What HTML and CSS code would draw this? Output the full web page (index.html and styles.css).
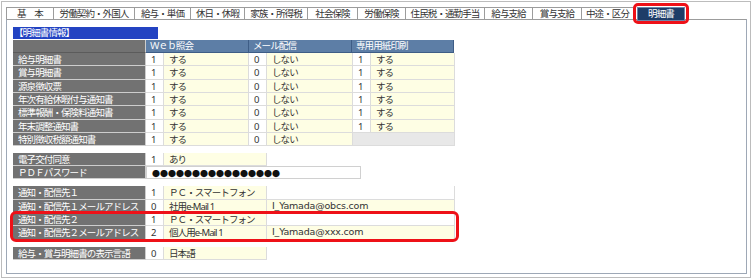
FILE: index.html
```html
<!DOCTYPE html>
<html lang="ja">
<head>
    <meta charset="UTF-8">
    <title>明細書</title>
    <link rel="stylesheet" href="styles.css">
</head>
<body>
    <div class="frame">
        <div class="tabs">
            <div class="tab" style="width:47px">基　本</div>
            <div class="tab" style="width:81px">労働契約・外国人</div>
            <div class="tab" style="width:56px">給与・単価</div>
            <div class="tab" style="width:54px">休日・休暇</div>
            <div class="tab" style="width:63px">家族・所得税</div>
            <div class="tab" style="width:50px">社会保険</div>
            <div class="tab" style="width:48px">労働保険</div>
            <div class="tab" style="width:79px">住民税・通勤手当</div>
            <div class="tab" style="width:48px">給与支給</div>
            <div class="tab" style="width:49px">賞与支給</div>
            <div class="tab" style="width:52px">中途・区分</div>
            <div class="tab active">明細書</div>
        </div>
        <div class="panel">
            <div class="sec-title">【明細書情報】</div>

            <!-- 明細書の配信方法 -->
            <div class="grid">
                <div class="row head">
                    <div class="lbl"></div>
                    <div class="hcell">Ｗｅｂ照会</div>
                    <div class="hcell">メール配信</div>
                    <div class="hcell">専用用紙印刷</div>
                </div>
                <div class="row">
                    <div class="lbl">給与明細書</div>
                    <div class="code">1</div><div class="val v1">する</div>
                    <div class="code">0</div><div class="val v2">しない</div>
                    <div class="code">1</div><div class="val v3">する</div>
                </div>
                <div class="row">
                    <div class="lbl">賞与明細書</div>
                    <div class="code">1</div><div class="val v1">する</div>
                    <div class="code">0</div><div class="val v2">しない</div>
                    <div class="code">1</div><div class="val v3">する</div>
                </div>
                <div class="row">
                    <div class="lbl">源泉徴収票</div>
                    <div class="code">1</div><div class="val v1">する</div>
                    <div class="code">0</div><div class="val v2">しない</div>
                    <div class="code">1</div><div class="val v3">する</div>
                </div>
                <div class="row">
                    <div class="lbl">年次有給休暇付与通知書</div>
                    <div class="code">1</div><div class="val v1">する</div>
                    <div class="code">0</div><div class="val v2">しない</div>
                    <div class="code">1</div><div class="val v3">する</div>
                </div>
                <div class="row">
                    <div class="lbl">標準報酬・保険料通知書</div>
                    <div class="code">1</div><div class="val v1">する</div>
                    <div class="code">0</div><div class="val v2">しない</div>
                    <div class="code">1</div><div class="val v3">する</div>
                </div>
                <div class="row">
                    <div class="lbl">年末調整通知書</div>
                    <div class="code">1</div><div class="val v1">する</div>
                    <div class="code">0</div><div class="val v2">しない</div>
                    <div class="code">1</div><div class="val v3">する</div>
                </div>
                <div class="row">
                    <div class="lbl">特別徴収税額通知書</div>
                    <div class="code">1</div><div class="val v1">する</div>
                    <div class="code">0</div><div class="val v2">しない</div>
                    <div class="blank"></div>
                </div>
            </div>

            <!-- 電子交付 -->
            <div class="block first">
                <div class="row">
                    <div class="lbl">電子交付同意</div>
                    <div class="code">1</div><div class="val wide">あり</div>
                </div>
                <div class="row">
                    <div class="lbl">ＰＤＦパスワード</div>
                    <div class="pass">●●●●●●●●●●●●●●●●</div>
                </div>
            </div>

            <!-- 通知・配信先 -->
            <div class="block">
                <div class="row">
                    <div class="lbl">通知・配信先１</div>
                    <div class="code">1</div><div class="val wide">ＰＣ・スマートフォン</div>
                    <div class="empty"></div>
                </div>
                <div class="row">
                    <div class="lbl">通知・配信先１メールアドレス</div>
                    <div class="code">0</div><div class="val wide">社用e-Mail 1</div>
                    <div class="val addr">I_Yamada@obcs.com</div>
                </div>
                <div class="row">
                    <div class="lbl">通知・配信先２</div>
                    <div class="code">1</div><div class="val wide">ＰＣ・スマートフォン</div>
                    <div class="empty"></div>
                </div>
                <div class="row">
                    <div class="lbl">通知・配信先２メールアドレス</div>
                    <div class="code">2</div><div class="val wide">個人用e-Mail 1</div>
                    <div class="val addr">I_Yamada@xxx.com</div>
                </div>
            </div>

            <!-- 表示言語 -->
            <div class="block">
                <div class="row">
                    <div class="lbl">給与・賞与明細書の表示言語</div>
                    <div class="code">0</div><div class="val wide">日本語</div>
                </div>
            </div>

            <div class="mark mark-tab"></div>
            <div class="mark mark-rows"></div>
        </div>
    </div>
</body>
</html>
```

FILE: styles.css
```css
body {
    margin: 0;
    background-color: #fff;
    font-family: "Noto Sans", "Noto Sans CJK JP", sans-serif;
    font-size: 9.5px;
    letter-spacing: -0.9px;
    color: #333;
}
.frame {
    margin: 1px;
    height: 277px;
    border: 1px solid #bcbcbc;
    box-sizing: border-box;
    padding: 5px 0 0 4px;
}
.tabs {
    display: flex;
    height: 12px;
}
.tab {
    box-sizing: border-box;
    height: 13px;
    border: 1px solid #9c9c9c;
    border-bottom: none;
    border-right: none;
    background-color: #fff;
    text-align: center;
    line-height: 12px;
    color: #333;
    white-space: nowrap;
}
.tab.active {
    width: 48px;
    margin-left: 4px;
    height: 14px;
    border: 1px solid #6d86aa;
    background-color: #1e3d68;
    color: #fff;
    position: relative;
    z-index: 1;
}
.panel {
    position: relative;
    box-sizing: border-box;
    width: 741px;
    height: 255px;
    border: 1px solid #9ea8b6;
    border-top-color: #9c9c9c;
    padding: 7px 0 0 6px;
}
.sec-title {
    width: 145px;
    height: 12px;
    line-height: 12px;
    background-color: #2343c2;
    color: #fff;
    padding-left: 1px;
    box-sizing: border-box;
    margin-bottom: 1px;
}
.row {
    display: flex;
    height: 13.333px;
    line-height: 12px;
}
.head {
    height: 13px;
}
.row > div {
    box-sizing: border-box;
    height: 100%;
    padding-top: 1px;
    white-space: nowrap;
}
.head > div {
    padding-top: 0;
}
.lbl {
    width: 133px;
    background-color: #727272;
    color: #fff;
    padding-left: 5px;
    border-bottom: 1px solid #cdcdcd;
    border-right: 1px solid #cdcdcd;
}
.head .lbl {
    border-bottom-color: #5b5b5b;
}
.hcell {
    width: 103px;
    background-color: #5d7ea6;
    color: #fff;
    padding-left: 4px;
    border-right: 1px solid #3e5d86;
    border-bottom: 1px solid #3e5d86;
}
.head .hcell:last-child {
    width: 102px;
}
.code {
    width: 18px;
    background-color: #fff;
    padding-left: 5px;
    border-right: 1px solid #dcdcdc;
    border-bottom: 1px solid #dcdcdc;
}
.val {
    background-color: #fefee4;
    padding-left: 5px;
    border-right: 1px solid #dcdcdc;
    border-bottom: 1px solid #dcdcdc;
}
.v1 { width: 85px; }
.v2 { width: 86px; }
.v3 { width: 84px; }
.wide { width: 103px; }
.row > .addr {
    width: 188px;
    padding-top: 0;
    font-family: "DejaVu Sans", sans-serif;
    font-size: 9.5px;
    letter-spacing: -0.2px;
    position: relative;
    z-index: 1;
}
.blank {
    width: 102px;
    background-color: #e8e8e8;
    border-right: 1px solid #dcdcdc;
    border-bottom: 1px solid #dcdcdc;
}
.empty {
    width: 188px;
    border-right: 1px solid #dcdcdc;
    border-bottom: 1px solid #dcdcdc;
}
.pass {
    width: 215px;
    border: 1px solid #d0d0d0;
    padding-left: 5px;
    font-family: "Noto Sans CJK JP", sans-serif;
    font-size: 8px;
    letter-spacing: 0;
    color: #111;
}
.block {
    margin-top: 7px;
}
.block.first {
    margin-top: 6.5px;
}
.mark {
    position: absolute;
    border: 3px solid #ee1118;
    border-radius: 5px;
    box-sizing: border-box;
    z-index: 2;
}
.mark-tab {
    left: 626px;
    top: -17px;
    width: 56px;
    height: 21px;
}
.mark-rows {
    left: 3px;
    top: 191px;
    width: 449px;
    height: 31px;
    border-radius: 6px;
}
```
